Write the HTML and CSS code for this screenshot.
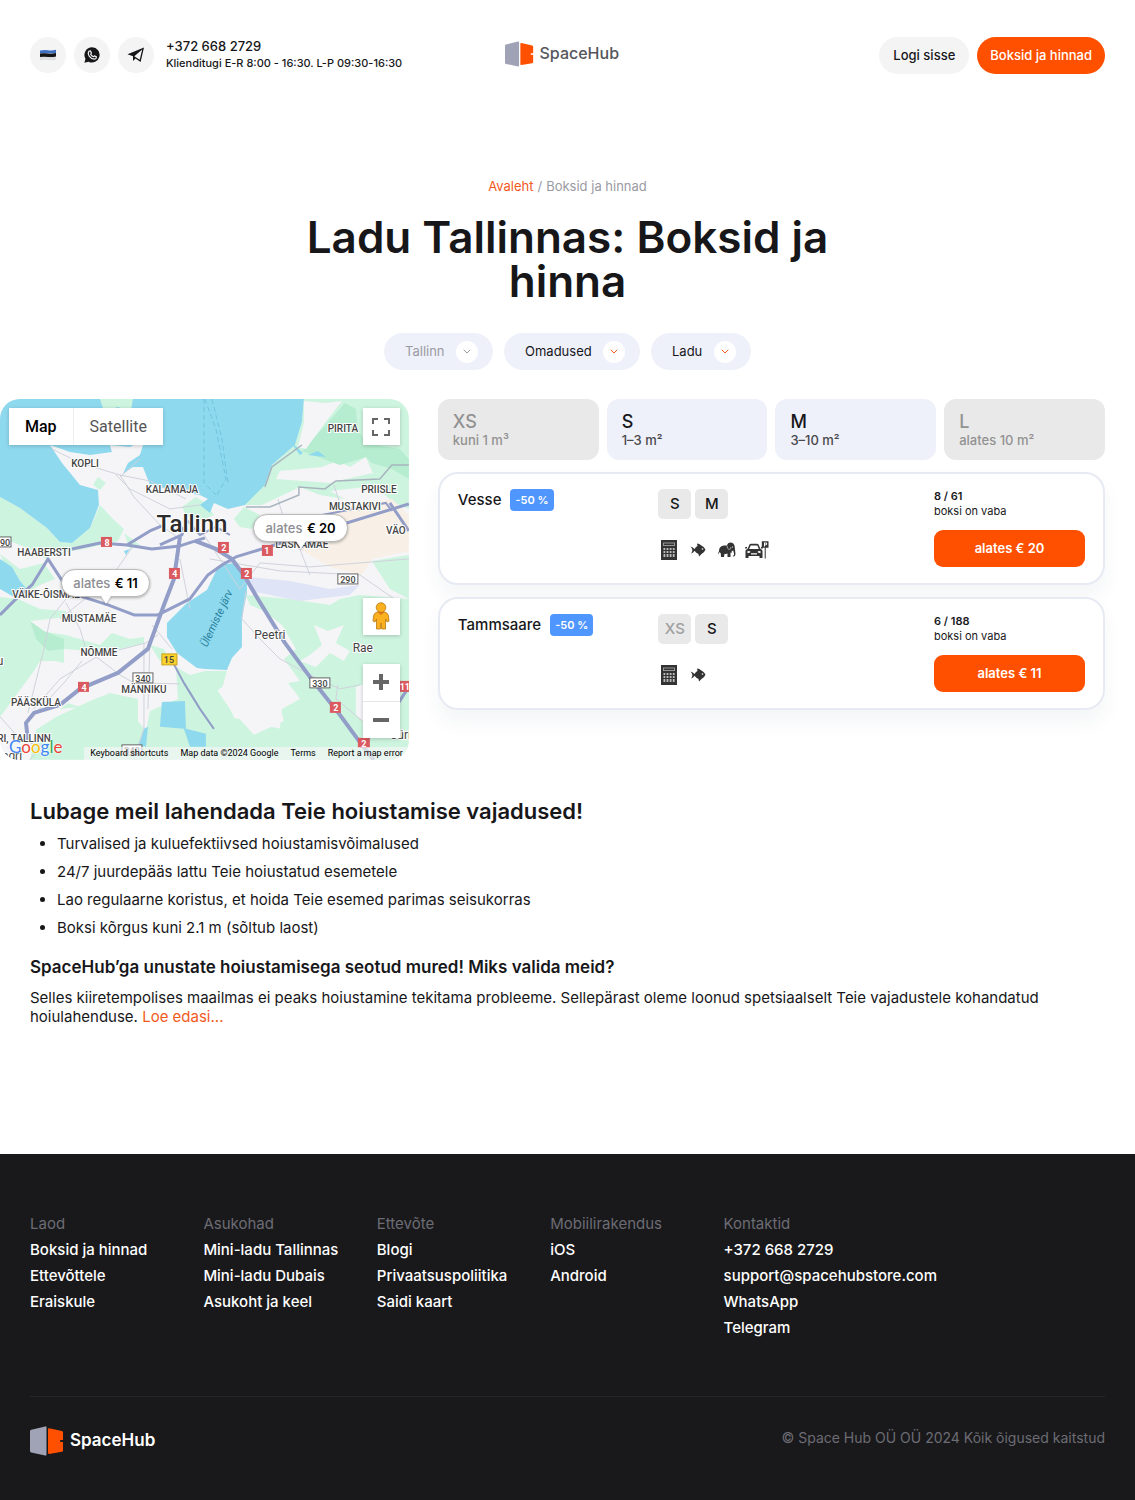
FILE: index.html
```html
<!DOCTYPE html>
<html lang="et">
<head>
    <meta charset="UTF-8">
    <meta name="viewport" content="width=device-width, initial-scale=1.0">
    <title>Ladu Tallinnas: Boksid ja hinnad - SpaceHub</title>
    <link rel="stylesheet" href="styles.css">
</head>
<body>
    <!-- Shared icons -->
    <svg class="sprite" aria-hidden="true">
        <symbol id="logo-mark" viewBox="0 0 34 30">
            <path fill="#a0a3b5" d="M1.200 3.800 15.200.400Q16.500.200 16.500 1.500V28.500Q16.500 29.800 15.200 29.600L1.200 26.600Q0 26.300 0 25V5.300Q0 4.100 1.200 3.800Z"/>
            <path fill="#ff5000" d="M19.200 2.200 31.900 5Q33 5.300 33 6.400V14H31Q30 14 30 15T31 16H33V24.400Q33 25.500 31.900 25.800L19.200 27.900Q18 28 18 26.800V3.200Q18 2 19.200 2.200Z"/>
        </symbol>
        <symbol id="chevron" viewBox="0 0 8 5">
            <path fill="none" stroke="currentColor" stroke-linecap="round" stroke-linejoin="round" d="M1 1 4 4 7 1"/>
        </symbol>
        <symbol id="calculator" viewBox="0 0 16 20">
            <path fill="#333" d="M0 0H16V20H0Z"/>
            <path fill="#999" d="M2 2.500H14V6H2Z"/>
            <path fill="#333" d="M3 3.500H13V5H3Z"/>
            <path fill="#bbb" d="M2.500 8h1.800v2H2.500zM5.600 8h1.800v2H5.600zM8.700 8h1.800v2H8.700zM11.800 8h1.800v2h-1.800zM2.500 11h1.800v2H2.500zM5.600 11h1.800v2H5.600zM8.700 11h1.800v2H8.700zM11.800 11h1.800v2h-1.800zM2.500 14h1.800v3H2.500zM5.600 14h1.800v3H5.600zM8.700 14h1.800v3H8.700zM11.800 14h1.800v3h-1.800z"/>
        </symbol>
        <symbol id="fish" viewBox="0 0 16 14">
            <path fill="#333" d="M.500 3.500Q3 4 4.500 6 6 3.500 7.500 3L7 .500Q9.500.500 11 2.300 14 3.500 15.500 6.500 14.500 9.500 11.500 11L9 13.500 8.500 11Q6.200 10 4.500 7.800 3.500 9.800 1 10.500 2.500 8.500 2.400 7 2.200 5 .500 3.500Z"/>
            <circle cx="12.500" cy="6" r=".8" fill="#fff"/>
        </symbol>
        <symbol id="elephant" viewBox="0 0 18 16">
            <path fill="#333" d="M1 9Q1 4 6 3.500L9 3.500Q9.500.500 13 .500 16.500 1 16.700 5L17.500 12Q17.300 14.800 15 14.500L15 13.500Q16.300 13.700 16.100 12L15.200 8.500 13.800 9 13.500 11 12.500 10.500 12.500 15H9.500V11.500Q8 12.300 6.500 11.700L6 15H3L2.800 11.500 1.500 10 .8 12 .2 11.500Z"/>
            <path fill="none" stroke="#bbb" stroke-width=".8" d="M9 3.500Q9 7 11 7.500 13 7.500 13 5"/>
            <circle cx="14.500" cy="5" r=".6" fill="#fff"/>
        </symbol>
        <symbol id="parking" viewBox="0 0 24 18">
            <path fill="#333" fill-rule="evenodd" d="M2.500 8 4.500 3.500Q5 2.800 6 2.800H12Q13 2.800 13.500 3.500L15.500 8Q17.500 8.500 17.500 10V17H14.500V15H3.500V17H.500V10Q.500 8.500 2.500 8ZM4.200 8H13.800L12.300 4.400H5.700ZM2.500 10V12.200L5.200 11.600V10.200ZM15.500 10V12.200L12.800 11.600V10.200ZM6 12.300H12V13.600H6ZM0 7.500H2V6H.3ZM18 7.500H16V6H17.700Z"/>
            <path fill="#333" fill-rule="evenodd" d="M16.800.200H23.500V6.800H20.700V17.500H19.700V6.800H16.800ZM19 1.500V5.500H20V4.200H20.800Q22.200 4 22.200 2.800T20.800 1.500ZM20 2.300H20.800V3.400H20Z"/>
        </symbol>
    </svg>

    <header class="header">
        <div class="header-contacts">
            <button class="round-btn" aria-label="Eesti keel">
                <svg width="16" height="12" viewBox="0 0 16 12">
                    <path fill="#3f70c4" d="M0 1.500Q4 .500 8 1.200T16 .700V4.500H0Z"/>
                    <path fill="#151515" d="M0 4.500Q4 3.800 8 4.500T16 4V8.200H0Z"/>
                    <path fill="#dcdee2" d="M0 8Q4 7.300 8 8T16 7.500V10.800Q12 11.800 8 11T0 11.500Z"/>
                </svg>
            </button>
            <a href="#" class="round-btn" aria-label="WhatsApp">
                <svg width="16" height="16" viewBox="0 0 16 16">
                    <path fill="#17171a" d="M8.200.300A7.600 7.600 0 1 1 4.600 14.700L.400 15.800 1.500 11.700A7.600 7.600 0 0 1 8.200.300Z"/>
                    <path fill="none" stroke="#f4f4f4" stroke-width="1.200" stroke-linejoin="round" d="M5.300 4 6.400 3.800 7.400 6 6.700 7.200Q7.600 9 9.300 9.700L10.400 8.900 12.400 9.900Q12.400 12 10.400 12.200 7.300 12 5.400 9.300 3.200 6.200 5.300 4Z"/>
                </svg>
            </a>
            <a href="#" class="round-btn" aria-label="Telegram">
                <svg width="18" height="16" viewBox="0 0 18 16">
                    <path fill="#17171a" fill-rule="evenodd" d="M.500 7.200 17 .500 13.600 15 8.500 11.400 6 14V9.200ZM7.300 9.300 12.700 12.700 15.200 2.600Z"/>
                </svg>
            </a>
            <div class="header-phone">
                <a href="#" class="phone">+372 668 2729</a>
                <p class="hours">Klienditugi E-R 8:00 - 16:30. L-P 09:30-16:30</p>
            </div>
        </div>
        <a href="#" class="logo">
            <svg class="logo-mark"><use href="#logo-mark"/></svg>
            <span>SpaceHub</span>
        </a>
        <div class="header-actions">
            <a href="#" class="btn btn-light">Logi sisse</a>
            <a href="#" class="btn btn-primary">Boksid ja hinnad</a>
        </div>
    </header>

    <main>
        <section class="intro">
            <nav class="breadcrumbs">
                <a href="#">Avaleht</a>
                <span>/</span>
                <span>Boksid ja hinnad</span>
            </nav>
            <h1>Ladu Tallinnas: Boksid ja hinna</h1>
            <div class="filters">
                <label class="filter disabled">
                    <select aria-label="Linn" disabled><option>Tallinn</option></select>
                    <span class="filter-arrow"><svg width="8" height="5"><use href="#chevron"/></svg></span>
                </label>
                <label class="filter">
                    <select aria-label="Omadused"><option>Omadused</option></select>
                    <span class="filter-arrow"><svg width="8" height="5"><use href="#chevron"/></svg></span>
                </label>
                <label class="filter">
                    <select aria-label="Ladu"><option>Ladu</option></select>
                    <span class="filter-arrow"><svg width="8" height="5"><use href="#chevron"/></svg></span>
                </label>
            </div>
        </section>

        <section class="results">
            <div class="map">
                <svg class="map-canvas" viewBox="0 0 409 361" preserveAspectRatio="xMidYMid slice">
                    <rect width="409" height="361" fill="#f5f5f7"/>

                    <!-- Parks -->
                    <g fill="#cdf4df">
                        <path d="M304 0H409V110L395 104 380 92 372 72 366 58 350 68 338 62 322 68 280 72 276 80 330 84 372 74 380 84 366 88 330 92 345 100 320 96 300 88 262 106 240 106 265 86 272 66 295 46 302 23Z"/>
                        <path d="M0 98 20 109 47 129 60 143 72 144 90 129 100 106 113 120 124 130 118 142 84 150 55 155 46 160 30 150 0 138Z"/>
                        <path d="M0 155 20 170 44 164 55 180 40 186 30 192 10 180Z"/>
                        <path d="M93 86 98 78 106 84 100 91ZM124 134 140 146 130 150ZM182 108 196 98 206 104 214 116 200 122 186 116ZM234 120 244 108 260 116 252 130 240 128Z"/>
                        <path d="M0 198 18 200 40 210 66 212 66 218 30 222 34 234 60 240 64 262 40 262 34 272 0 318Z"/>
                        <path d="M28 240 40 232 66 236 100 246 112 234 130 240 144 238 144 244 120 250 90 252 64 250 64 264 38 258Z"/>
                        <path d="M36 331 56 318 90 302 110 294 138 300 138 322 146 332 150 312 178 300 176 268 190 276 205 272 227 272 222 290 218 292 230 310 240 330 252 334 262 326 290 332 300 361H30Z"/>
                        <path d="M246 196 290 200 330 206 340 200 360 196 409 200V361H300L280 330 282 310 300 300 296 294 288 284 300 282 284 260 296 250 282 226 264 212 250 206Z"/>
                        <path d="M150 246 164 250 170 262 160 262ZM60 310 68 304 80 308ZM372 162 409 156V200L390 190Z"/>
                        <path d="M218 318 240 320 260 334 246 350 222 340Z"/>
                    </g>
                    <g fill="#b6edd0">
                        <path d="M324 28 345 4 356 10 358 30 366 44 400 50 409 60V80L392 70 372 64 366 58 340 66 318 58 302 52Z"/>
                        <path d="M30 222 44 232 64 240 64 250 48 252 36 240Z"/>
                    </g>
                    <g fill="#f5f5f7">
                        <path d="M314 226 328 232 344 226 336 244 350 252 344 262 330 254 316 268 300 262 310 256 322 246Z"/>
                        <path d="M218 291 260 262 276 270 282 284 300 300 280 308 284 322 254 336 238 318Z"/>
                        <path d="M304 2 326 4 342 2 322 28 306 50 298 48 304 24ZM356 288 380 280 399 290 396 320 372 330 356 316Z"/>
                    </g>
                    <path fill="#f8f0e6" d="M332 112 392 100 409 116V152L372 160 362 176 330 168 300 150 310 128Z"/>
                    <path fill="#dfe4f6" d="M248 178 290 182 330 190 360 186 350 196 300 202 250 192Z"/>

                    <!-- Water -->
                    <g fill="#8fd9ee">
                        <path d="M0 0H304L302 23 295 46 272 66 265 86 245 106 228 110 214 104 210 114 200 106 208 100 200 96 187 94 150 86 143 68 133 68 123 75 128 64 140 56 145 40 130 48 110 46 112 53 90 56 70 53 50 46 62 64 80 86 98 91 99 106 90 129 72 144 60 143 47 129 20 109 0 98Z"/>
                        <path d="M217 170 225 165 237 164 247 180 247 194 242 218 242 248 232 259 227 271 205 270 197 269 177 254 167 238 167 224 187 204 207 191Z"/>
                        <path d="M0 160 12 168 20 182 30 194 14 198 0 190Z"/>
                        <path d="M162 303 185 302 186 330 206 335V348H190L184 330 160 328ZM144 330 148 328 146 348 138 346ZM126 156 124 152 130 150Z"/>
                        <path d="M290 42 303 54 300 56ZM308 56 318 52 326 58 316 57Z"/>
                    </g>
                    <path fill="#cdf4df" d="M100 0H133L131 12 118 8 104 12Z"/>
                    <g fill="none" stroke="#6fc4df" stroke-dasharray="5 3">
                        <path d="M204 0V84L216 96M205 0 216 30 226 80 216 98M212 0 222 40 228 84"/>
                    </g>

                    <!-- Minor roads -->
                    <g fill="none" stroke="#d0d2dc" stroke-width="1">
                        <path d="M52 50 80 64 120 76 134 98 160 126 180 140M120 76 150 82 186 100M116 76 130 90 170 110 200 106M140 60 120 78M134 146 110 180 60 220"/>
                        <path d="M28 314 44 250 50 220 66 200M34 310 60 280 100 256 146 244 158 236M30 320 64 284 82 262M66 204 80 230 86 250 120 276 134 284 180 285M144 244V330L134 361M150 244 148 310M152 226 172 250M180 160 190 210"/>
                        <path d="M0 318 20 340 40 348 30 361M200 130 240 190 260 164 310 168 409 160M278 100 290 140 300 150 310 176M334 86 340 104 360 112M210 160 280 172 360 176 400 204"/>
                        <path d="M246 192 242 220 260 240 280 260 310 276 340 290 360 286M338 286 336 300 372 330"/>
                        <path stroke="#a8b4bd" stroke-width="1.500" d="M302 46 272 68 265 88M246 108 270 108 299 96V88L325 90 336 82 380 80 392 66 409 66"/>
                    </g>

                    <!-- Highways -->
                    <g fill="none" stroke="#929dc8" stroke-width="3" stroke-linejoin="round">
                        <path d="M72 150 100 144 127 146 152 150 180 147 205 139M127 146 150 132 162 127M160 146 182 136 184 128M0 216 14 202 32 186 48 160 70 194 108 206 134 216 158 216 190 200 208 176 222 166 236 158 409 105"/>
                        <path stroke-width="4" d="M180 138 174 180 164 206 148 250 118 274 80 290 60 306 34 314 26 324 28 342M195 142 216 150 232 160 244 176 258 200 285 244 310 278 340 316 362 346 374 361"/>
                        <path d="M390 104 409 132M409 288 396 308 392 330"/>
                    </g>
                    <g fill="none" stroke="#929dc8" stroke-width="2">
                        <path d="M170 258 184 284 200 310 214 330M186 120 200 136 216 128 230 136M322 116 386 104 392 112"/>
                    </g>

                    <!-- Road shields -->
                    <g class="shield-red">
                        <rect x="101" y="138" width="11" height="10"/><text x="107" y="147">8</text>
                        <rect x="169" y="169" width="11" height="11"/><text x="175" y="178">4</text>
                        <rect x="218" y="143" width="11" height="11"/><text x="224" y="152">2</text>
                        <rect x="262" y="146" width="11" height="11"/><text x="267" y="155">1</text>
                        <rect x="241" y="169" width="11" height="11"/><text x="247" y="178">2</text>
                        <rect x="78" y="283" width="11" height="10"/><text x="84" y="292">4</text>
                        <rect x="330" y="303" width="11" height="11"/><text x="336" y="312">2</text>
                        <rect x="358" y="339" width="12" height="10"/><text x="364" y="348">2</text>
                        <rect x="399" y="282" width="14" height="11"/><text x="405" y="291">11</text>
                    </g>
                    <g class="shield-white">
                        <rect x="-7" y="138" width="18" height="10"/><text x="5" y="147">90</text>
                        <rect x="338" y="175" width="20" height="10"/><text x="348" y="184">290</text>
                        <rect x="133" y="274" width="20" height="10"/><text x="143" y="283">340</text>
                        <rect x="310" y="279" width="20" height="10"/><text x="320" y="288">330</text>
                        <rect x="122" y="346" width="20" height="10"/><text x="132" y="355">340</text>
                        <rect class="yellow" x="162" y="255" width="15" height="11"/><text x="169" y="264">15</text>
                    </g>

                    <!-- Place names -->
                    <g class="place">
                        <text x="85" y="68">KOPLI</text>
                        <text x="172" y="94">KALAMAJA</text>
                        <text x="343" y="33">PIRITA</text>
                        <text x="379" y="94">PRIISLE</text>
                        <text x="355" y="111">MUSTAKIVI</text>
                        <text x="396" y="135">VÄO</text>
                        <text x="44" y="157">HAABERSTI</text>
                        <text x="302" y="149">LASNAMÄE</text>
                        <text x="46" y="199">VÄIKE-ÕISMÄE</text>
                        <text x="89" y="223">MUSTAMÄE</text>
                        <text x="99" y="257">NÕMME</text>
                        <text x="144" y="294">MÄNNIKU</text>
                        <text x="36" y="307">PÄÄSKÜLA</text>
                        <text x="24" y="343">RI, TALLINN</text>
                    </g>
                    <g class="town">
                        <text x="270" y="240">Peetri</text>
                        <text x="363" y="253">Rae</text>
                        <text x="401" y="340">Jüri</text>
                        <text x="12" y="361">agri</text>
                        <text x="0" y="266">u</text>
                    </g>
                    <text class="lake" transform="translate(220 221) rotate(-65)">Ülemiste järv</text>
                    <text class="city" x="192" y="133">Tallinn</text>
                </svg>

                <div class="map-type">
                    <button class="active">Map</button>
                    <button>Satellite</button>
                </div>
                <button class="map-btn map-fullscreen" aria-label="Fullscreen">
                    <svg width="18" height="18" viewBox="0 0 18 18"><path fill="none" stroke="#666" stroke-width="2" d="M1 6V1H6M12 1H17V6M17 12V17H12M6 17H1V12"/></svg>
                </button>
                <div class="map-tools">
                    <button class="map-btn" aria-label="Street View">
                        <svg width="18" height="28" viewBox="0 0 18 28">
                            <path fill="#fbb01f" stroke="#b97914" stroke-width=".8" d="M5 10Q2 11 1.500 14L1 19 3 20 4.500 17V27H8.300L9 21 9.700 27H13.500V17L15 20 17 19 16.500 14Q16 11 13 10Z"/>
                            <path fill="#e0701a" d="M5.500 9.800H12.500L9 13Z"/>
                            <circle cx="9" cy="5.500" r="4.800" fill="#fbb01f" stroke="#b97914" stroke-width=".8"/>
                        </svg>
                    </button>
                    <div class="zoom">
                        <button class="map-btn" aria-label="Zoom in"><svg width="18" height="18"><path fill="#666" d="M7 1H11V7H17V11H11V17H7V11H1V7H7Z"/></svg></button>
                        <button class="map-btn" aria-label="Zoom out"><svg width="18" height="18"><path fill="#666" d="M1 7H17V11H1Z"/></svg></button>
                    </div>
                </div>

                <a href="#" class="pin pin-vesse">alates <b>€ 20</b></a>
                <a href="#" class="pin pin-tammsaare">alates <b>€ 11</b></a>

                <div class="google"><span class="g-blue">G</span><span class="g-red">o</span><span class="g-yellow">o</span><span class="g-blue">g</span><span class="g-green">l</span><span class="g-red">e</span></div>
                <div class="map-legal">
                    <button>Keyboard shortcuts</button>
                    <span>Map data ©2024 Google</span>
                    <a href="#">Terms</a>
                    <a href="#">Report a map error</a>
                </div>
            </div>

            <div class="list">
                <div class="sizes">
                    <button class="size" disabled><strong>XS</strong>kuni 1 m³</button>
                    <button class="size"><strong>S</strong>1–3 m²</button>
                    <button class="size"><strong>M</strong>3–10 m²</button>
                    <button class="size" disabled><strong>L</strong>alates 10 m²</button>
                </div>

                <article class="card">
                    <div class="card-title">
                        <h2>Vesse</h2>
                        <span class="discount">-50 %</span>
                    </div>
                    <div class="card-info">
                        <div class="tags">
                            <span class="tag">S</span>
                            <span class="tag">M</span>
                        </div>
                        <div class="features">
                            <svg width="22" height="20"><use href="#calculator"/></svg>
                            <svg width="22" height="14"><use href="#fish"/></svg>
                            <svg width="22" height="16"><use href="#elephant"/></svg>
                            <svg width="24" height="18"><use href="#parking"/></svg>
                        </div>
                    </div>
                    <div class="card-price">
                        <p><b>8 / 61</b><br>boksi on vaba</p>
                        <a href="#" class="price-btn">alates € 20</a>
                    </div>
                </article>

                <article class="card">
                    <div class="card-title">
                        <h2>Tammsaare</h2>
                        <span class="discount">-50 %</span>
                    </div>
                    <div class="card-info">
                        <div class="tags">
                            <span class="tag muted">XS</span>
                            <span class="tag">S</span>
                        </div>
                        <div class="features">
                            <svg width="22" height="20"><use href="#calculator"/></svg>
                            <svg width="22" height="14"><use href="#fish"/></svg>
                        </div>
                    </div>
                    <div class="card-price">
                        <p><b>6 / 188</b><br>boksi on vaba</p>
                        <a href="#" class="price-btn">alates € 11</a>
                    </div>
                </article>
            </div>
        </section>

        <section class="about">
            <h2>Lubage meil lahendada Teie hoiustamise vajadused!</h2>
            <ul>
                <li>Turvalised ja kuluefektiivsed hoiustamisvõimalused</li>
                <li>24/7 juurdepääs lattu Teie hoiustatud esemetele</li>
                <li>Lao regulaarne koristus, et hoida Teie esemed parimas seisukorras</li>
                <li>Boksi kõrgus kuni 2.1 m (sõltub laost)</li>
            </ul>
            <h3>SpaceHub’ga unustate hoiustamisega seotud mured! Miks valida meid?</h3>
            <p>Selles kiiretempolises maailmas ei peaks hoiustamine tekitama probleeme. Sellepärast oleme loonud spetsiaalselt Teie vajadustele kohandatud hoiulahenduse. <a href="#">Loe edasi...</a></p>
        </section>
    </main>

    <footer class="footer">
        <div class="footer-nav">
            <div class="footer-col">
                <h4>Laod</h4>
                <a href="#">Boksid ja hinnad</a>
                <a href="#">Ettevõttele</a>
                <a href="#">Eraiskule</a>
            </div>
            <div class="footer-col">
                <h4>Asukohad</h4>
                <a href="#">Mini-ladu Tallinnas</a>
                <a href="#">Mini-ladu Dubais</a>
                <a href="#">Asukoht ja keel</a>
            </div>
            <div class="footer-col">
                <h4>Ettevõte</h4>
                <a href="#">Blogi</a>
                <a href="#">Privaatsuspoliitika</a>
                <a href="#">Saidi kaart</a>
            </div>
            <div class="footer-col">
                <h4>Mobiilirakendus</h4>
                <a href="#">iOS</a>
                <a href="#">Android</a>
            </div>
            <div class="footer-col">
                <h4>Kontaktid</h4>
                <a href="#">+372 668 2729</a>
                <a href="#">support@spacehubstore.com</a>
                <a href="#">WhatsApp</a>
                <a href="#">Telegram</a>
            </div>
        </div>
        <div class="footer-bottom">
            <a href="#" class="logo logo-footer">
                <svg class="logo-mark"><use href="#logo-mark"/></svg>
                <span>SpaceHub</span>
            </a>
            <p>© Space Hub OÜ OÜ 2024 Kõik õigused kaitstud</p>
        </div>
    </footer>
</body>
</html>
```
FILE: styles.css
```css
* {
    margin: 0;
    padding: 0;
    box-sizing: border-box;
}

body {
    font-family: Inter, 'Liberation Sans', sans-serif;
    font-size: 15px;
    line-height: 19px;
    color: #17171a;
    background: #fff;
}

a {
    color: inherit;
    text-decoration: none;
}

button,
select {
    font: inherit;
    color: inherit;
    border: none;
    background: none;
    cursor: pointer;
}

.sprite {
    display: none;
}

/* Header */
.header {
    display: grid;
    grid-template-columns: 1fr auto 1fr;
    align-items: start;
    padding: 37px 30px 0;
}

.header-contacts {
    display: flex;
    align-items: flex-start;
    gap: 8px;
    white-space: nowrap;
}

.round-btn {
    display: flex;
    flex: none;
    align-items: center;
    justify-content: center;
    width: 36px;
    height: 36px;
    border-radius: 50%;
    background: #f4f4f4;
}

.header-phone {
    margin-left: 4px;
    font-weight: 500;
}

.phone {
    display: block;
    font-size: 13px;
    line-height: 18px;
}

.hours {
    font-size: 11px;
    line-height: 16px;
}

.logo {
    display: flex;
    align-items: center;
    gap: 6px;
    min-width: 126px;
    font-size: 16px;
    font-weight: 500;
    color: #55555c;
}

.header .logo {
    height: 33px;
}

.logo-mark {
    width: 29px;
    height: 26px;
}

.header-actions {
    display: flex;
    justify-content: flex-end;
    gap: 8px;
}

.btn {
    padding: 0 13px;
    border-radius: 19px;
    font-size: 13px;
    font-weight: 500;
    line-height: 37px;
    white-space: nowrap;
}

.btn-light {
    padding: 0 14px;
    background: #f4f4f4;
}

.btn-primary {
    background: #ff5000;
    color: #fff;
}

/* Intro */
.intro {
    padding: 103px 30px 0;
    text-align: center;
}

.breadcrumbs {
    display: flex;
    justify-content: center;
    gap: 4px;
    font-size: 13px;
    color: #9a9aa3;
}

.breadcrumbs a {
    color: #f25a1d;
}

h1 {
    max-width: 560px;
    margin: 19px auto 0;
    font-size: 44px;
    font-weight: 600;
    line-height: 44px;
}

.filters {
    display: flex;
    justify-content: center;
    gap: 11px;
    margin-top: 30px;
}

.filter {
    display: flex;
    align-items: center;
    gap: 11px;
    height: 37px;
    padding: 0 15px 0 21px;
    border-radius: 19px;
    background: #eff1fa;
    font-size: 13px;
    color: #17171a;
}

.filter select {
    appearance: none;
    outline: none;
    opacity: 1;
}

.filter-arrow {
    display: flex;
    align-items: center;
    justify-content: center;
    width: 22px;
    height: 22px;
    border-radius: 50%;
    background: #fff;
    color: #f25a1d;
}

.filter.disabled,
.filter.disabled .filter-arrow {
    color: #9a9aa3;
}

/* Results */
.results {
    display: grid;
    grid-template-columns: 37% 1fr;
    gap: 29px;
    align-items: start;
    padding-right: 30px;
    margin-top: 29px;
}

.map {
    position: relative;
    aspect-ratio: 409 / 361;
    border-radius: 20px;
    overflow: hidden;
    font-family: Roboto, sans-serif;
}

.map-canvas {
    display: block;
    width: 100%;
    height: 100%;
}

.map-canvas text {
    text-anchor: middle;
    font-size: 10px;
    font-weight: 500;
    fill: #444;
}

.map-canvas .place text,
.map-canvas .town text,
.map-canvas .city {
    stroke: #fff;
    stroke-width: 2px;
    paint-order: stroke;
}

.map-canvas .town text {
    font-size: 12px;
    font-weight: 400;
}

.map-canvas .city {
    font-size: 24px;
    fill: #2b2b2b;
}

.map-canvas .lake {
    font-size: 11px;
    font-weight: 400;
    font-style: italic;
    fill: #237f9c;
}

.shield-red rect {
    fill: #db5a60;
}

.map-canvas .shield-red text {
    font-size: 9px;
    font-weight: 700;
    fill: #fff;
}

.shield-white rect {
    fill: #fff;
    stroke: #666;
}

.shield-white .yellow {
    fill: #fcd12a;
    stroke: #c9a21a;
}

.map-canvas .shield-white text {
    font-size: 9px;
}

.map-type {
    position: absolute;
    top: 9px;
    left: 9px;
    display: flex;
    background: #fff;
    box-shadow: 0 1px 4px rgba(0,0,0,0.2);
    font-size: 16px;
    color: #565656;
}

.map-type button {
    height: 37px;
    padding: 0 16px;
}

.map-type .active {
    border-right: 1px solid #eee;
    font-weight: 500;
    color: #000;
}

.map-btn {
    display: flex;
    align-items: center;
    justify-content: center;
    width: 37px;
    height: 37px;
    background: #fff;
    box-shadow: 0 1px 4px rgba(0,0,0,0.2);
}

.map-fullscreen {
    position: absolute;
    top: 9px;
    right: 9px;
}

.map-tools {
    position: absolute;
    right: 9px;
    bottom: 22px;
    display: grid;
    gap: 29px;
}

.zoom {
    background: #fff;
    box-shadow: 0 1px 4px rgba(0,0,0,0.2);
}

.zoom .map-btn {
    box-shadow: none;
}

.zoom .map-btn + .map-btn {
    border-top: 1px solid #e6e6e6;
}

.pin {
    position: absolute;
    padding: 0 11px;
    border: 1px solid #bbb;
    border-radius: 14px;
    background: #fff;
    box-shadow: 0 1px 3px rgba(0,0,0,0.3);
    font-family: Inter, sans-serif;
    font-size: 13px;
    font-weight: 500;
    line-height: 26px;
    white-space: nowrap;
    color: #8d8d93;
}

.pin b {
    margin-left: 1px;
    font-weight: 600;
    color: #000;
}

.pin::after {
    content: '';
    position: absolute;
    top: 100%;
    left: 50%;
    border: 5px solid transparent;
    border-top: 8px solid #fff;
    border-bottom: none;
    transform: translateX(-50%);
    filter: drop-shadow(0 1px 1px rgba(0,0,0,0.3));
}

.pin-vesse {
    top: 32%;
    left: 62%;
}

.pin-tammsaare {
    top: 47%;
    left: 15%;
}

.google {
    position: absolute;
    bottom: 2px;
    left: 9px;
    font-family: Lato, sans-serif;
    font-size: 17px;
    line-height: 22px;
    text-shadow: 0 0 2px #fff, 0 0 2px #fff;
}

.g-blue { color: #4285f4; }
.g-red { color: #ea4335; }
.g-yellow { color: #fbbc05; }
.g-green { color: #34a853; }

.map-legal {
    position: absolute;
    right: 0;
    bottom: 0;
    display: flex;
    gap: 12px;
    padding: 0 6px;
    background: rgba(245,245,245,0.7);
    font-size: 9px;
    line-height: 13px;
    white-space: nowrap;
    color: #000;
}

.list {
    display: grid;
    gap: 12px;
}

.sizes {
    display: grid;
    grid-template-columns: repeat(4, 1fr);
    gap: 8px;
}

.size {
    padding: 13px 15px 11px;
    border-radius: 12px;
    background: #eff1fa;
    font-size: 13px;
    font-weight: 500;
    line-height: 17px;
    text-align: left;
    color: #48484d;
}

.size strong {
    display: block;
    font-size: 18px;
    font-weight: 500;
    line-height: 20px;
    color: #17171a;
}

.size:disabled,
.size:disabled strong {
    background: #e9e9e9;
    color: #929292;
}

.card {
    display: grid;
    grid-template-columns: 8fr 11fr 151px;
    min-height: 113px;
    padding: 15px 18px;
    border: 2px solid #e8eaf3;
    border-radius: 20px;
    background: #fff;
    box-shadow: 0 12px 20px rgba(40,60,90,0.05);
}

.card-title {
    display: flex;
    align-items: flex-start;
    gap: 9px;
}

.card-title h2 {
    font-size: 15px;
    font-weight: 500;
    line-height: 22px;
}

.discount {
    padding: 0 5px;
    border-radius: 4px;
    background: #5096ff;
    font-size: 11px;
    font-weight: 600;
    line-height: 22px;
    color: #fff;
}

.tags {
    display: flex;
    gap: 4px;
}

.tag {
    width: 33px;
    border-radius: 5px;
    background: #e9e9e9;
    font-weight: 500;
    line-height: 30px;
    text-align: center;
}

.tag.muted {
    color: #a0a0a0;
}

.features {
    display: flex;
    align-items: center;
    gap: 7px;
    height: 20px;
    margin-top: 21px;
}

.card-price p {
    font-size: 11px;
    line-height: 15px;
}

.card-price b {
    font-weight: 600;
}

.price-btn {
    display: block;
    margin-top: 11px;
    border-radius: 9px;
    background: #ff5000;
    font-size: 13px;
    font-weight: 600;
    line-height: 37px;
    text-align: center;
    color: #fff;
}

/* About */
.about {
    padding: 38px 30px 128px;
}

.about h2 {
    font-size: 22px;
    font-weight: 600;
    line-height: 26px;
}

.about ul {
    margin: 10px 0 20px;
    padding-left: 27px;
}

.about li {
    margin-bottom: 9px;
}

.about h3 {
    margin-bottom: 11px;
    font-size: 17px;
    font-weight: 600;
    line-height: 20px;
}

.about a {
    color: #f25a1d;
}

/* Footer */
.footer {
    padding: 57px 30px 44px;
    background: #19191b;
    color: #fff;
}

.footer-nav {
    display: grid;
    grid-template-columns: repeat(4, 1fr) 2.2fr;
    padding-bottom: 55px;
    border-bottom: 1px solid #262628;
}

.footer-col {
    font-weight: 500;
    line-height: 26px;
}

.footer-col h4 {
    font-weight: 400;
    color: #6c6c74;
}

.footer-col a {
    display: block;
}

.footer-bottom {
    display: flex;
    justify-content: space-between;
    padding-top: 29px;
}

.footer-bottom p {
    font-size: 14px;
    line-height: 24px;
    color: #6c6c74;
}

.logo-footer {
    font-size: 17px;
    font-weight: 600;
    color: #fff;
}

.logo-footer .logo-mark {
    width: 34px;
    height: 30px;
}
```
